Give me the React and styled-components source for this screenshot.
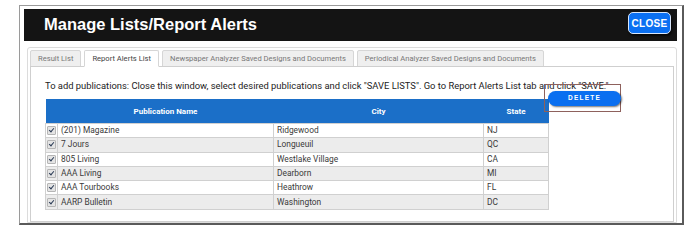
import React from 'react'
import styled, { createGlobalStyle } from 'styled-components'

const Global = createGlobalStyle`
    html, body {
        margin: 0;
        background: #fff;
    }
    body {
        font-family: Roboto, "Liberation Sans", sans-serif;
    }
`;

const Page = styled.div`
    padding: 5px 0 0 19px;
`;

const Frame = styled.div`
    width: 653px;
    height: 214px;
    border: 1px solid #9a9a9a;
    border-right: 2px solid #5a5a5a;
    border-bottom: 2px solid #5a5a5a;
    padding: 3px 5px 0 4px;
    display: flex;
    flex-direction: column;
    overflow: hidden;
`;

const Header = styled.header`
    height: 32px;
    background: #141414;
    display: flex;
    justify-content: space-between;
    align-items: flex-start;
    padding: 0 6px 0 20px;
    flex-shrink: 0;
`;

const Title = styled.h1`
    margin: 0;
    line-height: 30px;
    color: #fff;
    font-family: "Liberation Sans", Arial, sans-serif;
    font-weight: bold;
    font-size: 16.5px;
`;

const CloseBtn = styled.button`
    margin-top: 3px;
    width: 43px;
    height: 22px;
    padding: 0;
    background: #0b70f2;
    border: 1.5px solid #d8e6fa;
    border-radius: 5px;
    box-shadow: 1px 2px 2px rgba(0, 0, 0, 0.7);
    color: #fff;
    font-family: "Liberation Sans", Arial, sans-serif;
    font-weight: bold;
    font-size: 10px;
    letter-spacing: 0.3px;
`;

const Panel = styled.section`
    flex: 1;
    margin: 6px 0 0 3px;
    border: 1px solid #dcdcdc;
    border-radius: 3px 3px 0 0;
    padding: 2px 2px 0;
    display: flex;
    flex-direction: column;
`;

const Tabs = styled.div`
    display: flex;
    gap: 3px;
    height: 17px;
`;

const Tab = styled.div`
    padding: 0 7px;
    font-size: 7.6px;
    line-height: 16px;
    color: ${p => (p.$active ? '#444' : '#777')};
    background: ${p => (p.$active ? '#fff' : '#efefef')};
    border: 1px solid #d6d6d6;
    border-bottom: ${p => (p.$active ? '1px solid #fff' : '1px solid #d6d6d6')};
    border-radius: 2px 2px 0 0;
    position: relative;
    z-index: ${p => (p.$active ? 1 : 0)};
`;

const Content = styled.div`
    flex: 1;
    border: 1px solid #cfcfcf;
    margin-top: -1px;
    padding: 13px 14px 0;
    position: relative;
`;

const Note = styled.p`
    margin: 0 0 8px;
    font-size: 9.4px;
    line-height: 11px;
    color: #222;
    white-space: nowrap;
`;

const Table = styled.table`
    border-collapse: collapse;
    width: 503px;
    table-layout: fixed;
    font-size: 8.4px;
    line-height: 13px;
`;

const Th = styled.th`
    background: #1b6fc8;
    color: #fff;
    font-size: 8px;
    font-weight: bold;
    height: 24px;
    padding: 0;
`;

const Row = styled.tr`
    background: ${p => (p.$odd ? '#ececec' : '#fff')};
`;

const Td = styled.td`
    border: 1px solid #d0d0d0;
    height: 13.3px;
    padding: 0 0 0 3px;
    color: #3a3a3a;
    white-space: nowrap;
`;

const CheckCell = styled.td`
    border: 1px solid #d0d0d0;
    padding: 0;
    text-align: center;
    height: 13.3px;
    font-size: 0;
    line-height: 0;
`;

const Check = styled.span`
    display: inline-block;
    width: 7px;
    height: 7px;
    border: 1px solid #b5b5b5;
    border-radius: 1px;
    background: #e4e4e4;
    position: relative;
    &::after {
        content: '';
        position: absolute;
        left: 2px;
        top: 0px;
        width: 2px;
        height: 4px;
        border: solid #2a3a55;
        border-width: 0 1.3px 1.3px 0;
        transform: rotate(40deg);
    }
`;

const DeleteBox = styled.div`
    position: absolute;
    left: 513px;
    top: 17px;
    width: 75px;
    height: 26px;
    border: 1px solid #8e615c;
`;

const DeleteBtn = styled.button`
    position: absolute;
    left: 3px;
    top: 6px;
    width: 73px;
    height: 15px;
    padding: 0 0 2px;
    background: #0a6ff0;
    border: none;
    border-radius: 8px;
    box-shadow: 1px 1px 2px rgba(0, 0, 0, 0.55);
    color: #fff;
    font-family: "Liberation Sans", Arial, sans-serif;
    font-weight: bold;
    font-size: 6.5px;
    letter-spacing: 1.2px;
`;

const rows = [
    ['(201) Magazine', 'Ridgewood', 'NJ'],
    ['7 Jours', 'Longueuil', 'QC'],
    ['805 Living', 'Westlake Village', 'CA'],
    ['AAA Living', 'Dearborn', 'MI'],
    ['AAA Tourbooks', 'Heathrow', 'FL'],
    ['AARP Bulletin', 'Washington', 'DC'],
];

const tabs = [
    'Result List',
    'Report Alerts List',
    'Newspaper Analyzer Saved Designs and Documents',
    'Periodical Analyzer Saved Designs and Documents',
];

export default function App() {
    return (
        <Page>
            <Global />
            <Frame>
                <Header>
                    <Title>Manage Lists/Report Alerts</Title>
                    <CloseBtn>CLOSE</CloseBtn>
                </Header>
                <Panel>
                    <Tabs>
                        {tabs.map((t, i) => (
                            <Tab key={t} $active={i === 1}>{t}</Tab>
                        ))}
                    </Tabs>
                    <Content>
                        <Note>
                            To add publications: Close this window, select desired publications and click "SAVE LISTS". Go to Report Alerts List tab and click "SAVE."
                        </Note>
                        <Table>
                            <colgroup>
                                <col style={{ width: 12 }} />
                                <col style={{ width: 216 }} />
                                <col style={{ width: 210 }} />
                                <col style={{ width: 65 }} />
                            </colgroup>
                            <thead>
                                <tr>
                                    <Th />
                                    <Th>Publication Name</Th>
                                    <Th>City</Th>
                                    <Th>State</Th>
                                </tr>
                            </thead>
                            <tbody>
                                {rows.map((r, i) => (
                                    <Row key={r[0]} $odd={i % 2 === 1}>
                                        <CheckCell><Check /></CheckCell>
                                        <Td>{r[0]}</Td>
                                        <Td>{r[1]}</Td>
                                        <Td>{r[2]}</Td>
                                    </Row>
                                ))}
                            </tbody>
                        </Table>
                        <DeleteBox>
                            <DeleteBtn>DELETE</DeleteBtn>
                        </DeleteBox>
                    </Content>
                </Panel>
            </Frame>
        </Page>
    );
}
